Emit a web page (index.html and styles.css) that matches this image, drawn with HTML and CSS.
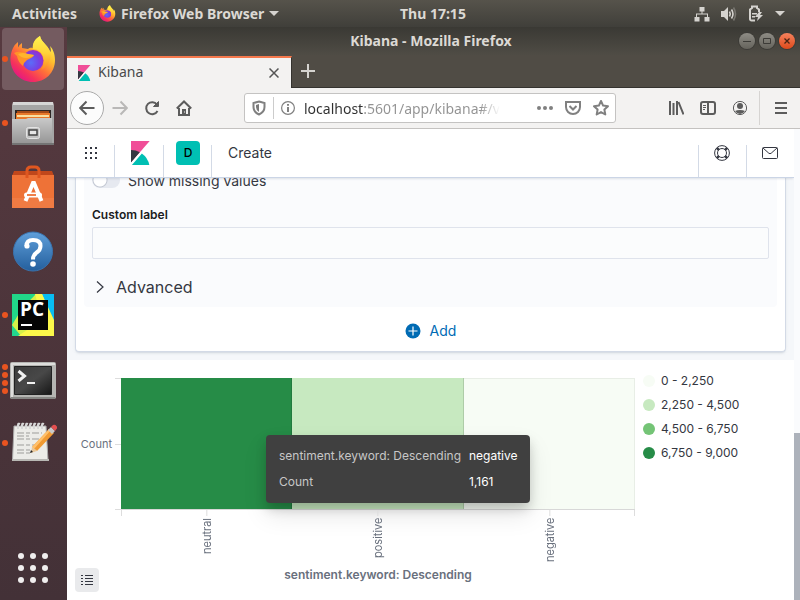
FILE: index.html
```html
<!DOCTYPE html>
<html lang="en">
<head>
<meta charset="utf-8">
<title>Kibana - Mozilla Firefox</title>
<link rel="stylesheet" href="styles.css">
</head>
<body>
<header class="topbar">
  <div class="topbar-left">
    <button class="plain">Activities</button>
    <button class="plain app-menu">
      <svg width="17" height="17" viewBox="0 0 48 48"><use href="#fox"/></svg>
      <span>Firefox Web Browser</span>
      <svg width="10" height="6" viewBox="0 0 10 6"><path fill="#d5d3cf" d="M0 0h10L5 5z"/></svg>
    </button>
  </div>
  <button class="plain">Thu 17:15</button>
  <button class="plain tray" aria-label="System menu">
    <svg width="16" height="16" viewBox="0 0 16 16" fill="#d5d3cf"><path d="M5.500 1h5v4.500h-2v2H14V11h1.500v4.500h-5V11h2.500V8.500H3V11h2.500v4.500h-5V11H2V7.500h5.500v-2h-2z"/></svg>
    <svg width="16" height="16" viewBox="0 0 16 16" fill="none" stroke="#d5d3cf" stroke-width="1.600"><path fill="#d5d3cf" stroke="none" d="M0 5h3l4-4v14l-4-4H0z"/><path d="M8.500 5.500q1.500 2.500 0 5M10.500 3.500q3 4.500 0 9"/><path stroke="#77756f" d="M12.500 1.500q4 6.500 0 13"/></svg>
    <svg width="16" height="17" viewBox="0 0 16 17"><path fill="none" stroke="#d5d3cf" stroke-width="2" d="M7 15.500H3.500a1.500 1.500 0 0 1-1.500-1.500V4.500L4 3V1.500h5V3l2 1.500V7"/><path fill="#d5d3cf" d="M4 8h5v1.500H4zM4 11h3v1.500H4zM11 7l-4 5h3l-1 4 6-6h-3l2-3z"/></svg>
    <svg width="10" height="6" viewBox="0 0 10 6"><path fill="#d5d3cf" d="M0 0h10L5 5z"/></svg>
  </button>
</header>

<div class="desktop">
  <nav class="dock" aria-label="Dock">
    <button class="dock-item active" aria-label="Firefox">
      <span class="dots"><i></i></span>
      <svg width="48" height="48" viewBox="0 0 48 48">
        <defs>
          <linearGradient id="foxBody" x1=".85" y1=".1" x2=".2" y2=".95"><stop offset="0" stop-color="#fff44f"/><stop offset=".3" stop-color="#ffbd2e"/><stop offset=".55" stop-color="#ff7139"/><stop offset=".8" stop-color="#f5325c"/><stop offset="1" stop-color="#e31587"/></linearGradient>
          <radialGradient id="foxGlobe" cx=".4" cy=".6" r=".65"><stop offset="0" stop-color="#5b6df8"/><stop offset=".6" stop-color="#7542e5"/><stop offset="1" stop-color="#a22bc2"/></radialGradient>
          <linearGradient id="foxTail" x1=".5" y1="0" x2=".5" y2="1"><stop offset="0" stop-color="#fff44f"/><stop offset=".5" stop-color="#ffd43a"/><stop offset="1" stop-color="#ff8a1e"/></linearGradient>
          <g id="fox">
            <path fill="url(#foxBody)" d="M4 13Q1 19 1.500 26C2.500 38 12 47 24 47s22-9 22-22c0-6-2-11-5-14 1 3 1 5 .5 6C38 9 32 7 31 1c-5 3-7.500 7-7 12-2-.5-4 .2-5 1l-6-1V8q-3 2-4 4.500L9 7q-4 3-5 6z"/>
            <circle cx="24" cy="25.500" r="10.500" fill="url(#foxGlobe)"/>
            <path fill="url(#foxTail)" d="M31 1c-5 3-8 8-7 13 5 0 9 3 10 7 2 5 1 10-2 14 6-3 9-8 9.500-14C42 11 32 8 31 1z"/>
            <path fill="#ff9428" d="M5 18q6-3 13 1l7 1q0 2-7 5-3 2-4 6-5-4-6-10z"/>
            <path fill="#ffb52d" d="M9 19q5-2 10 0l6 1q-3 3-8 3-5 0-8-4z"/>
          </g>
        </defs>
        <use href="#fox"/>
      </svg>
    </button>
    <button class="dock-item" aria-label="Files">
      <span class="dots"><i></i></span>
      <svg width="48" height="48" viewBox="0 0 48 48">
        <defs><linearGradient id="cab" x2="0" y2="1"><stop offset="0" stop-color="#c9c9c9"/><stop offset="1" stop-color="#959595"/></linearGradient></defs>
        <path fill="#d6d6d6" d="M4 3h40l1 4H3z"/><path fill="#a5a5a5" d="M3 6h42v38H3z"/>
        <path fill="#2d2624" d="M6 11h36v10H6z"/><path fill="#a44a18" d="M8 12h32v8H8z"/><path fill="#e9792a" d="M7 14h34v6H7z"/><path fill="#f9dfa0" d="M8 16h32v2H8z"/><path fill="#e9792a" d="M7 18h34v3H7z"/>
        <path fill="url(#cab)" d="M5 20h12l2-1h24v26H3V20z"/><path fill="#747474" d="M3 44h42v2H3z"/>
        <rect x="17.500" y="28.500" width="13" height="11" rx="2" fill="#c2c2c2" stroke="#e4e4e4"/><path fill="#e6e6e6" stroke="#444" stroke-width="1.500" d="M20 31h8v5h-8z"/>
      </svg>
    </button>
    <button class="dock-item" aria-label="Ubuntu Software">
      <svg width="48" height="48" viewBox="0 0 48 48">
        <path fill="#c0471b" d="M5 8h38l2 5H3z"/><path fill="#ee7237" d="M3 12h42v33H3z"/><path fill="#f28450" d="M3 35h42v10H3z" opacity=".5"/>
        <path fill="none" stroke="#df5720" stroke-width="3" d="M18 15V8q0-4 4-4h4q4 0 4 4v7"/>
        <path fill="none" stroke="#fff" stroke-width="4" d="M16.500 38 24 20h1l7.500 18"/><rect x="15" y="29.500" width="18" height="5" rx="2.500" fill="#fff"/><path stroke="#ee7237" stroke-width="1.800" d="M18 32h9"/>
      </svg>
    </button>
    <button class="dock-item" aria-label="Help">
      <svg width="48" height="48" viewBox="0 0 48 48">
        <defs><linearGradient id="helpBg" x2="0" y2="1"><stop offset="0" stop-color="#5f9fda"/><stop offset="1" stop-color="#245f9d"/></linearGradient></defs>
        <circle cx="24" cy="24.500" r="19.500" fill="url(#helpBg)" stroke="#3973ae"/>
        <path fill="none" stroke="#fff" stroke-width="4" d="M17.500 19q0-6 6.500-6 7.500 0 7.500 6 0 4-3.800 6.500-3.700 2.500-3.700 7"/><circle cx="18" cy="19" r="2.600" fill="#fff"/><circle cx="24" cy="37" r="2.800" fill="#fff"/>
      </svg>
    </button>
    <button class="dock-item" aria-label="PyCharm">
      <span class="dots"><i></i></span>
      <svg width="48" height="48" viewBox="0 0 48 48">
        <path fill="#22d88f" d="M3 3h42v42H3z"/><path fill="#d5f04a" d="M22 3h12l11 32v10H12L3 34z"/><path fill="#21d789" d="M3 3h24L3 28z"/><path fill="#08bdf2" d="M33 3h12v31z"/><path fill="#fcf84a" d="M26 3h7l12 26v16H9l24-16z"/>
        <path fill="#050505" d="M9 9h30v30H9z"/><path fill="#fff" d="M12 33h11v2H12z"/>
        <text x="11" y="25" class="pc">PC</text>
      </svg>
    </button>
    <button class="dock-item" aria-label="Terminal">
      <span class="dots"><i></i><i></i><i></i><i></i></span>
      <svg width="48" height="48" viewBox="0 0 48 48">
        <defs><linearGradient id="term" x2="1" y2="1"><stop offset="0" stop-color="#3b3b3b"/><stop offset=".5" stop-color="#484848"/><stop offset="1" stop-color="#161616"/></linearGradient></defs>
        <rect x="1" y="7" width="46" height="37" rx="2" fill="#b5b5b2"/><path fill="#dededc" d="M2 8h44v2H2zM2 9h2v33H2z"/><path fill="#868683" d="M2 42h44v2H2z"/>
        <path fill="url(#term)" stroke="#222" d="M5.500 11.500h37v28h-37z"/>
        <path fill="none" stroke="#f1f1f1" stroke-width="3" d="m9.500 16 6 5-6 5"/><path stroke="#f1f1f1" stroke-width="2" d="M18 28h8"/>
      </svg>
    </button>
    <button class="dock-item" aria-label="Text Editor">
      <span class="dots"><i></i></span>
      <svg width="48" height="48" viewBox="0 0 48 48">
        <path fill="#ecece8" stroke="#aaa" d="M5 7h32l2 34H3.500z"/><path fill="#b8b8b4" d="M3 40h37v2H3z"/>
        <path stroke="#9d9d9a" stroke-dasharray="7 2 4 2" d="M8 14h25M8 17h12M8 20h24M8 26h22M8 31h18M8 34h14"/>
        <g fill="none" stroke="#d8d8d8" stroke-width="2"><path d="M9 10V6q0-2 2-1M13 10V6q0-2 2-1M17 10V6q0-2 2-1M21 10V6q0-2 2-1M25 10V6q0-2 2-1M29 10V6q0-2 2-1M33 10V6q0-2 2-1"/></g>
        <path fill="#f19a32" d="m23 28 17-18 5 4-17 18z"/><path fill="#ffc06b" d="m23 28 17-18 2 1-17 19z"/><path fill="#e8c79a" d="m23 28 5 4-6 2z"/><path fill="#222" d="m22 31 2 2-3 1z"/><path fill="#c9c9c9" d="m39 11 3-3 4 4-3 3z"/><path fill="#e35050" d="m42 8 2-2q2-1 3.500 1t0 3L46 12z"/>
      </svg>
    </button>
    <button class="dock-item apps" aria-label="Show Applications">
      <svg width="32" height="32" viewBox="0 0 32 32" fill="#f0eeee"><circle cx="4" cy="4" r="3"/><circle cx="16" cy="4" r="3"/><circle cx="28" cy="4" r="3"/><circle cx="4" cy="16" r="3"/><circle cx="16" cy="16" r="3"/><circle cx="28" cy="16" r="3"/><circle cx="4" cy="28" r="3"/><circle cx="16" cy="28" r="3"/><circle cx="28" cy="28" r="3"/></svg>
    </button>
  </nav>

  <div class="window">
    <div class="titlebar">
      <span class="window-title">Kibana - Mozilla Firefox</span>
      <div class="window-buttons">
        <button class="win-btn" aria-label="Minimize"><svg width="10" height="10" viewBox="0 0 10 10"><path stroke="#3c3b37" d="M1 5.500h8"/></svg></button>
        <button class="win-btn" aria-label="Maximize"><svg width="10" height="10" viewBox="0 0 10 10"><path fill="none" stroke="#3c3b37" d="M1.500 2.500h7v5h-7z"/></svg></button>
        <button class="win-btn close" aria-label="Close"><svg width="10" height="10" viewBox="0 0 10 10"><path stroke="#4a2413" stroke-width="1.300" d="m2.500 2.500 5 5m0-5-5 5"/></svg></button>
      </div>
    </div>

    <div class="tabs">
      <div class="tab">
        <svg width="16" height="16" viewBox="0 0 32 32"><use href="#kibana"/></svg>
        <span class="tab-title">Kibana</span>
        <button class="icon-btn tab-close" aria-label="Close tab"><svg width="10" height="10" viewBox="0 0 10 10"><path stroke="#555" stroke-width="1.500" d="m.5.5 9 9m0-9-9 9"/></svg></button>
      </div>
      <button class="icon-btn new-tab" aria-label="New tab"><svg width="14" height="14" viewBox="0 0 14 14"><path stroke="#d5d3cf" stroke-width="2" d="M7 0v14M0 7h14"/></svg></button>
    </div>

    <div class="toolbar">
      <button class="icon-btn back" aria-label="Back"><svg width="16" height="16" viewBox="0 0 16 16" class="ink"><path d="M15.500 8H1.500M7.500 1.500 1.200 8l6.300 6.500"/></svg></button>
      <button class="icon-btn" aria-label="Forward" disabled><svg width="16" height="16" viewBox="0 0 16 16" class="ink faint"><path d="M.5 8h14M8.500 1.500 14.800 8l-6.300 6.500"/></svg></button>
      <button class="icon-btn" aria-label="Reload"><svg width="16" height="16" viewBox="0 0 16 16" class="ink"><path d="M13 4.500A6 6 0 1 0 13.500 11"/><path d="M14.500 1.500v5h-5z" fill="#5c5c5c" stroke-width="1"/></svg></button>
      <button class="icon-btn" aria-label="Home"><svg width="16" height="16" viewBox="0 0 16 16" class="ink"><path d="M.8 8.500 8 1.500l7.200 7M3 8v7h10V8"/><path fill="#5c5c5c" stroke="none" d="M6 9h4v6H6z"/><path stroke="#f3f2f1" stroke-width="1" d="M8 12h1"/></svg></button>
      <div class="urlbar">
        <svg class="ink soft" width="14" height="16" viewBox="0 0 14 16"><path d="M7 1.500 12.500 3v4q0 5-5.500 7.500Q1.500 12 1.500 7V3z"/><path fill="#7a7a7a" stroke="none" d="M7 4v8Q4 10 4 7V5z"/></svg>
        <svg class="info ink soft" width="14" height="14" viewBox="0 0 14 14"><circle cx="7" cy="7" r="6.400" stroke-width="1.200"/><path d="M7 6v5M7 3v1.800"/></svg>
        <input class="url" type="text" aria-label="Address" value="localhost:5601/app/kibana#/v">
        <button class="icon-btn small" aria-label="Page actions"><svg width="16" height="16" viewBox="0 0 16 16" fill="#808080"><circle cx="2" cy="8" r="2"/><circle cx="8" cy="8" r="2"/><circle cx="14" cy="8" r="2"/></svg></button>
        <button class="icon-btn small" aria-label="Save to Pocket"><svg width="16" height="16" viewBox="0 0 16 16" class="ink soft"><path d="M1 2h14v5a7 7 0 0 1-14 0zM4.500 6 8 9.500 11.500 6"/></svg></button>
        <button class="icon-btn small" aria-label="Bookmark this page"><svg width="16" height="16" viewBox="0 0 16 16" class="ink soft"><path stroke-linejoin="round" d="m8 1 2.100 4.600 4.900.6-3.600 3.400.9 4.900L8 12.100l-4.300 2.400.9-4.900L1 6.200l4.900-.6z"/></svg></button>
      </div>
      <button class="icon-btn" aria-label="Library"><svg width="16" height="16" viewBox="0 0 16 16" class="ink"><path d="M2 1v14M5.500 3v12M9 1v14M10.500 2l5 12.500"/></svg></button>
      <button class="icon-btn" aria-label="Sidebars"><svg width="16" height="16" viewBox="0 0 16 16" class="ink"><rect x="1" y="2" width="14" height="12" rx="2"/><path d="M8 2v12"/><path d="M3 5.500h3M3 7.500h3M3 9.500h2" class="thin"/></svg></button>
      <button class="icon-btn" aria-label="Account"><svg width="16" height="16" viewBox="0 0 16 16" class="ink"><circle cx="8" cy="8" r="6.600" class="thin"/><circle cx="8" cy="6" r="3" fill="#5c5c5c" stroke="none"/><path fill="#5c5c5c" stroke="none" d="M3 11q2-1 5-1t5 1q-2 3-5 3t-5-3z"/></svg></button>
      <span class="divider"></span>
      <button class="icon-btn" aria-label="Open menu"><svg width="14" height="14" viewBox="0 0 14 14" class="ink"><path d="M1 2h12M1 7h12M1 12h12"/></svg></button>
    </div>

    <div class="viewport">
      <div class="page">
        <header class="k-header">
          <button class="k-cell right" aria-label="Toggle navigation"><svg width="12" height="12" viewBox="0 0 12 12" fill="#343741"><path d="M0 0h2v2H0zM5 0h2v2H5zM10 0h2v2h-2zM0 5h2v2H0zM5 5h2v2H5zM10 5h2v2h-2zM0 10h2v2H0zM5 10h2v2H5zM10 10h2v2h-2z"/></svg></button>
          <a class="k-cell right home" href="#" aria-label="Kibana home">
            <svg width="24" height="24" viewBox="0 0 32 32"><g id="kibana"><path fill="#f04e98" d="M4 0v28.800L28.900 0z"/><path fill="#343741" d="M4 12v16.800l11.900-13.700Q10.500 12 4 12z"/><path fill="#00bfb3" d="M18.500 16.700 5.200 32h23.200q-2-9.800-9.900-15.300z"/><path stroke="#fff" stroke-width="2" d="M4 30.600 17.500 15"/></g></svg>
          </a>
          <button class="k-cell right" aria-label="Default space"><span class="avatar">D</span></button>
          <span class="crumb">Create</span>
          <button class="k-cell left" aria-label="Help"><svg width="16" height="16" viewBox="0 0 16 16" fill="none" stroke="#343741"><circle cx="8" cy="8" r="7.400"/><circle cx="8" cy="8" r="4.500"/><path stroke-width="2.600" d="m2.800 2.800 2 2m6.400 6.400 2 2m0-10.400-2 2m-6.400 6.400-2 2"/></svg></button>
          <button class="k-cell left" aria-label="Newsfeed"><svg width="16" height="12" viewBox="0 0 16 12" fill="none" stroke="#343741"><rect x=".5" y=".5" width="15" height="11" rx="1"/><path d="m1 1 5.800 5.200q1.200 1 2.400 0L15 1"/></svg></button>
        </header>

        <section class="editor">
          <form class="panel">
            <div class="agg">
              <label class="switch-row"><input type="checkbox" class="switch"><span>Show missing values</span></label>
              <label class="field-label" for="customLabel">Custom label</label>
              <input class="field" id="customLabel" type="text">
              <button type="button" class="advanced"><svg width="8" height="12" viewBox="0 0 8 12"><path fill="none" stroke="#343741" stroke-width="1.200" d="m1 .5 6 5.500-6 5.500"/></svg>Advanced</button>
            </div>
            <button type="button" class="add"><svg width="16" height="16" viewBox="0 0 16 16"><circle cx="8" cy="8" r="7.500" fill="#006bb4"/><path stroke="#fff" stroke-width="1.200" d="M8 3.500v9M3.500 8h9"/></svg>Add</button>
          </form>
        </section>

        <section class="vis">
          <div class="y-axis"><i></i><span>Count<i></i></span><i></i></div>
          <div class="plot">
            <div class="cell c4"></div><div class="cell c2"></div><div class="cell c1"></div>
            <table class="tooltip">
              <tr><th scope="row">sentiment.keyword: Descending</th><td>negative</td></tr>
              <tr><th scope="row">Count</th><td>1,161</td></tr>
            </table>
          </div>
          <ul class="legend">
            <li><i class="c1"></i>0 - 2,250</li>
            <li><i class="c2"></i>2,250 - 4,500</li>
            <li><i class="c3"></i>4,500 - 6,750</li>
            <li><i class="c4"></i>6,750 - 9,000</li>
          </ul>
          <div class="x-axis"><span>neutral</span><span>positive</span><span>negative</span></div>
          <button class="legend-toggle" aria-label="Toggle legend"><svg width="12" height="11" viewBox="0 0 12 11"><path fill="#343741" d="M0 0h2v1H0zM4 0h8v1H4zM0 3h2v1H0zM4 3h8v1H4zM0 6h2v1H0zM4 6h8v1H4zM0 9h2v1H0zM4 9h8v1H4z"/></svg></button>
          <h2 class="axis-title">sentiment.keyword: Descending</h2>
        </section>
      </div>
      <div class="scrollbar"><div class="thumb"></div></div>
    </div>
  </div>
</div>
</body>
</html>
```

FILE: styles.css
```css
* { box-sizing: border-box; }

body {
  margin: 0;
  height: 100vh;
  display: flex;
  flex-direction: column;
  overflow: hidden;
  font-family: "Noto Sans", "Open Sans", sans-serif;
}

button {
  margin: 0;
  padding: 0;
  border: 0;
  background: none;
  font: inherit;
  color: inherit;
}

svg { display: block; flex: none; }

/* Desktop bar */
.topbar {
  flex: 0 0 27px;
  display: flex;
  align-items: center;
  background: linear-gradient(#56534b, #403f3a);
  color: #dcd9d4;
  font-size: 14px;
  line-height: 20px;
  font-weight: 700;
}
.topbar-left { flex: 0 0 50%; display: flex; align-items: center; padding-left: 12px; gap: 22px; }
.plain { display: flex; align-items: center; white-space: nowrap; }
.app-menu { gap: 5px; }
.tray { margin-left: auto; padding-right: 15px; gap: 11px; }

.desktop { flex: 1; min-height: 0; display: flex; }

/* Dock */
.dock {
  flex: 0 0 67px;
  display: flex;
  flex-direction: column;
  background: linear-gradient(#573a40, #4b343a 60%, #433137);
}
.dock-item {
  position: relative;
  height: 64px;
  display: flex;
  align-items: center;
  justify-content: center;
  margin: 0 3px 0 2px;
}
.dock-item.active::before {
  content: "";
  position: absolute;
  inset: 1px 0;
  border-radius: 4px;
  background: #745b60;
}
.dock-item svg { position: relative; }
.dock-item.apps { margin-top: auto; }
.dots { position: absolute; left: 0; top: 0; bottom: 0; display: flex; flex-direction: column; justify-content: center; gap: 2px; z-index: 1; }
.dots i { width: 6px; height: 6px; border-radius: 50%; background: #e95420; }
.pc { font: 700 19px "Open Sans", sans-serif; fill: #fff; }

/* Browser frame */
.window { flex: 1; min-width: 0; display: flex; flex-direction: column; }
.titlebar {
  flex: 0 0 28px;
  display: grid;
  grid-template-columns: 1fr auto 1fr;
  align-items: center;
  padding-right: 5px;
  background: linear-gradient(#3a3934, #4f4c45);
  color: #dcd9d4;
  font-size: 14px;
  line-height: 20px;
  font-weight: 700;
}
.window-title { grid-column: 2; }
.window-buttons { display: flex; justify-content: flex-end; gap: 4px; }
.win-btn {
  width: 16px;
  height: 16px;
  display: grid;
  place-items: center;
  border-radius: 50%;
  background: linear-gradient(#8e8c85, #65635c);
  box-shadow: 0 0 0 1px #3c3b37;
}
.win-btn.close { background: linear-gradient(#f6825d, #de4a1b); }

.tabs { flex: 0 0 33px; display: flex; background: #504c45; box-shadow: inset 0 -1px #35332f; }
.tab {
  width: 225px;
  display: flex;
  align-items: center;
  padding: 0 9px;
  margin-top: 1px;
  border-top: 2px solid #f5784c;
  border-right: 1px solid #35332f;
  background: #f3f2f1;
  color: #4a4a4a;
  font-size: 14px;
  line-height: 20px;
}
.tab-title { flex: 1; margin-left: 6px; padding-bottom: 2px; }
.icon-btn { width: 32px; height: 32px; display: grid; place-items: center; flex: none; }
.tab-close { width: 16px; height: 16px; }

.toolbar {
  flex: 0 0 41px;
  display: flex;
  align-items: center;
  padding: 0 3px;
  background: #f3f2f1;
  border-bottom: 1px solid #c4c2c0;
}
.back { width: 34px; height: 34px; border: 1px solid #aaa; border-radius: 50%; background: #fcfcfc; }
.ink { fill: none; stroke: #5c5c5c; stroke-width: 2; }
.ink.soft { stroke: #808080; }
.ink.faint { stroke: #b9b8b7; }
.thin { stroke-width: 1; }
.divider { width: 1px; height: 34px; margin: 0 5px 0 3px; background: #d6d4d2; }

.urlbar {
  flex: 1;
  min-width: 0;
  height: 30px;
  display: flex;
  align-items: center;
  margin: 0 44px;
  padding: 0 0 0 7px;
  border: 1px solid #c4c3c2;
  border-radius: 3px;
  background: linear-gradient(#ccc, #ccc) 28px 50% / 1px 22px no-repeat, #fff;
}
.info { margin-left: 15px; }
.url {
  flex: 1;
  min-width: 0;
  margin: 0 28px 0 9px;
  padding: 0;
  border: 0;
  outline: 0;
  font: 14px "Noto Sans", "Open Sans", sans-serif;
  color: transparent;
  background: linear-gradient(90deg, #303030 59px, #929292 59px, #929292 176px, transparent 196px);
  background-clip: text;
  -webkit-background-clip: text;
}
.icon-btn.small { width: 28px; height: 28px; }

/* Page area */
.viewport { flex: 1; min-height: 0; display: flex; }
.page {
  flex: 1;
  min-width: 0;
  overflow: hidden;
  background: #fff;
  color: #343741;
  font-family: Inter, sans-serif;
  font-size: 14px;
}
.scrollbar { flex: 0 0 6px; display: flex; flex-direction: column; background: #fafbfd; }
.scrollbar::before { content: ""; flex: 304; }
.thumb { flex: 167; background: #adb2bb; }

.k-header {
  position: relative;
  z-index: 1;
  height: 49px;
  display: flex;
  background: #fff;
  border-bottom: 1px solid #cbd5e6;
  box-shadow: 0 2px 2px -1px rgba(152, 162, 179, .3);
}
.k-cell {
  width: 48px;
  display: grid;
  place-items: center;
  background: linear-gradient(#d3dae6, #d3dae6) 0 100% / 1px 32px no-repeat;
}
.k-cell.right { background-position-x: 100%; }
.k-cell.home { width: 49px; }
.avatar {
  width: 24px;
  height: 24px;
  border-radius: 4px;
  background: #00bfb3;
  color: #000;
  font-size: 12px;
  font-weight: 500;
  line-height: 24px;
  text-align: center;
}
.crumb { flex: 1; margin-left: 16px; line-height: 48px; }

.editor { padding: 0 8px 8px; background: #f5f7fa; }
.panel {
  padding: 0 8px;
  border: 1px solid #d3dae6;
  border-top: 0;
  border-radius: 0 0 4px 4px;
  background: #fff;
  box-shadow: 0 2px 2px -1px rgba(152, 162, 179, .3), 0 1px 5px -2px rgba(152, 162, 179, .3);
}
.agg {
  display: flex;
  flex-direction: column;
  padding: 0 8px 8px;
  margin-top: -8px;
  border-radius: 0 0 4px 4px;
  background: #fafbfd;
}
.switch-row { display: flex; align-items: center; gap: 8px; height: 20px; }
.switch {
  appearance: none;
  width: 28px;
  height: 16px;
  margin: 0;
  border-radius: 8px;
  background: radial-gradient(circle at 8px 8px, #fff 6px, #c3c8d3 7px, transparent 8px), #e6e9f0;
}
.field-label { margin-top: 16px; color: #1a1c21; font-size: 12px; font-weight: 600; line-height: 18px; }
.field {
  width: 100%;
  height: 32px;
  margin-top: 3px;
  padding: 0 8px;
  border: 1px solid #dfe3ec;
  border-radius: 2px;
  background: #fbfcfd;
  font: inherit;
}
.advanced { display: flex; align-items: center; align-self: flex-start; gap: 12px; margin-top: 16px; padding-left: 4px; font-size: 16px; line-height: 24px; }
.add { display: flex; align-items: center; gap: 9px; margin: 0 auto; padding-bottom: 4px; height: 44px; padding-top: 7px; color: #006bb4; }

/* Heatmap */
.vis {
  display: grid;
  grid-template-columns: 54px 1fr 159px;
  grid-template-rows: 132px 58px auto;
  padding-top: 18px;
}
.c1 { background: #f7fcf5; }
.c2 { background: #c7e9c0; }
.c3 { background: #74c476; }
.c4 { background: #268c47; }

.y-axis { display: flex; flex-direction: column; align-items: flex-end; justify-content: space-between; color: #69707d; font-size: 11px; }
.y-axis i { width: 6px; height: 1px; background: #ddd; }
.y-axis span { display: flex; align-items: center; gap: 3px; }

.plot { position: relative; display: flex; border-bottom: 1px solid #d8d8d8; }
.cell { flex: 1; border-right: 1px solid rgba(0, 0, 0, .12); }
.cell.c1 { border: 1px solid #e8eee6; border-width: 1px 1px 0 0; }

.tooltip {
  position: absolute;
  left: 145px;
  top: 57px;
  padding: 8px 12px 8px 13px;
  border-spacing: 0;
  border-radius: 4px;
  background: #404040;
  color: #fff;
  font-size: 12px;
  line-height: 26px;
  white-space: nowrap;
  box-shadow: 0 6px 12px -1px rgba(0, 0, 0, .2), 0 12px 24px rgba(0, 0, 0, .1);
}
.tooltip th, .tooltip td { padding: 0; font-weight: 400; text-align: left; }
.tooltip th { padding-right: 8px; color: #c7c7c7; }

.legend { margin: -9px 0 0; padding: 0 0 0 8px; list-style: none; font-size: 12px; line-height: 24px; }
.legend li { display: flex; align-items: center; gap: 6px; }
.legend i { width: 12px; height: 12px; border-radius: 50%; }

.x-axis {
  grid-column: 2;
  display: flex;
  background: linear-gradient(#ddd, #ddd) 0 0 / 1px 6px no-repeat, linear-gradient(#ddd, #ddd) 100% 0 / 1px 6px no-repeat;
  color: #69707d;
  font-size: 11px;
}
.x-axis span {
  flex: 1;
  display: flex;
  align-items: center;
  justify-content: flex-end;
  padding-bottom: 8px;
  writing-mode: vertical-rl;
  transform: rotate(180deg);
  background: linear-gradient(#ddd, #ddd) 50% 100% / 1px 6px no-repeat;
}

.legend-toggle { grid-column: 1; width: 24px; height: 24px; margin-left: 8px; display: grid; place-items: center; border-radius: 4px; background: #e9eaec; }
.axis-title { grid-column: 2; margin: 0; color: #69707d; font-size: 12px; font-weight: 600; line-height: 14px; text-align: center; }
```
